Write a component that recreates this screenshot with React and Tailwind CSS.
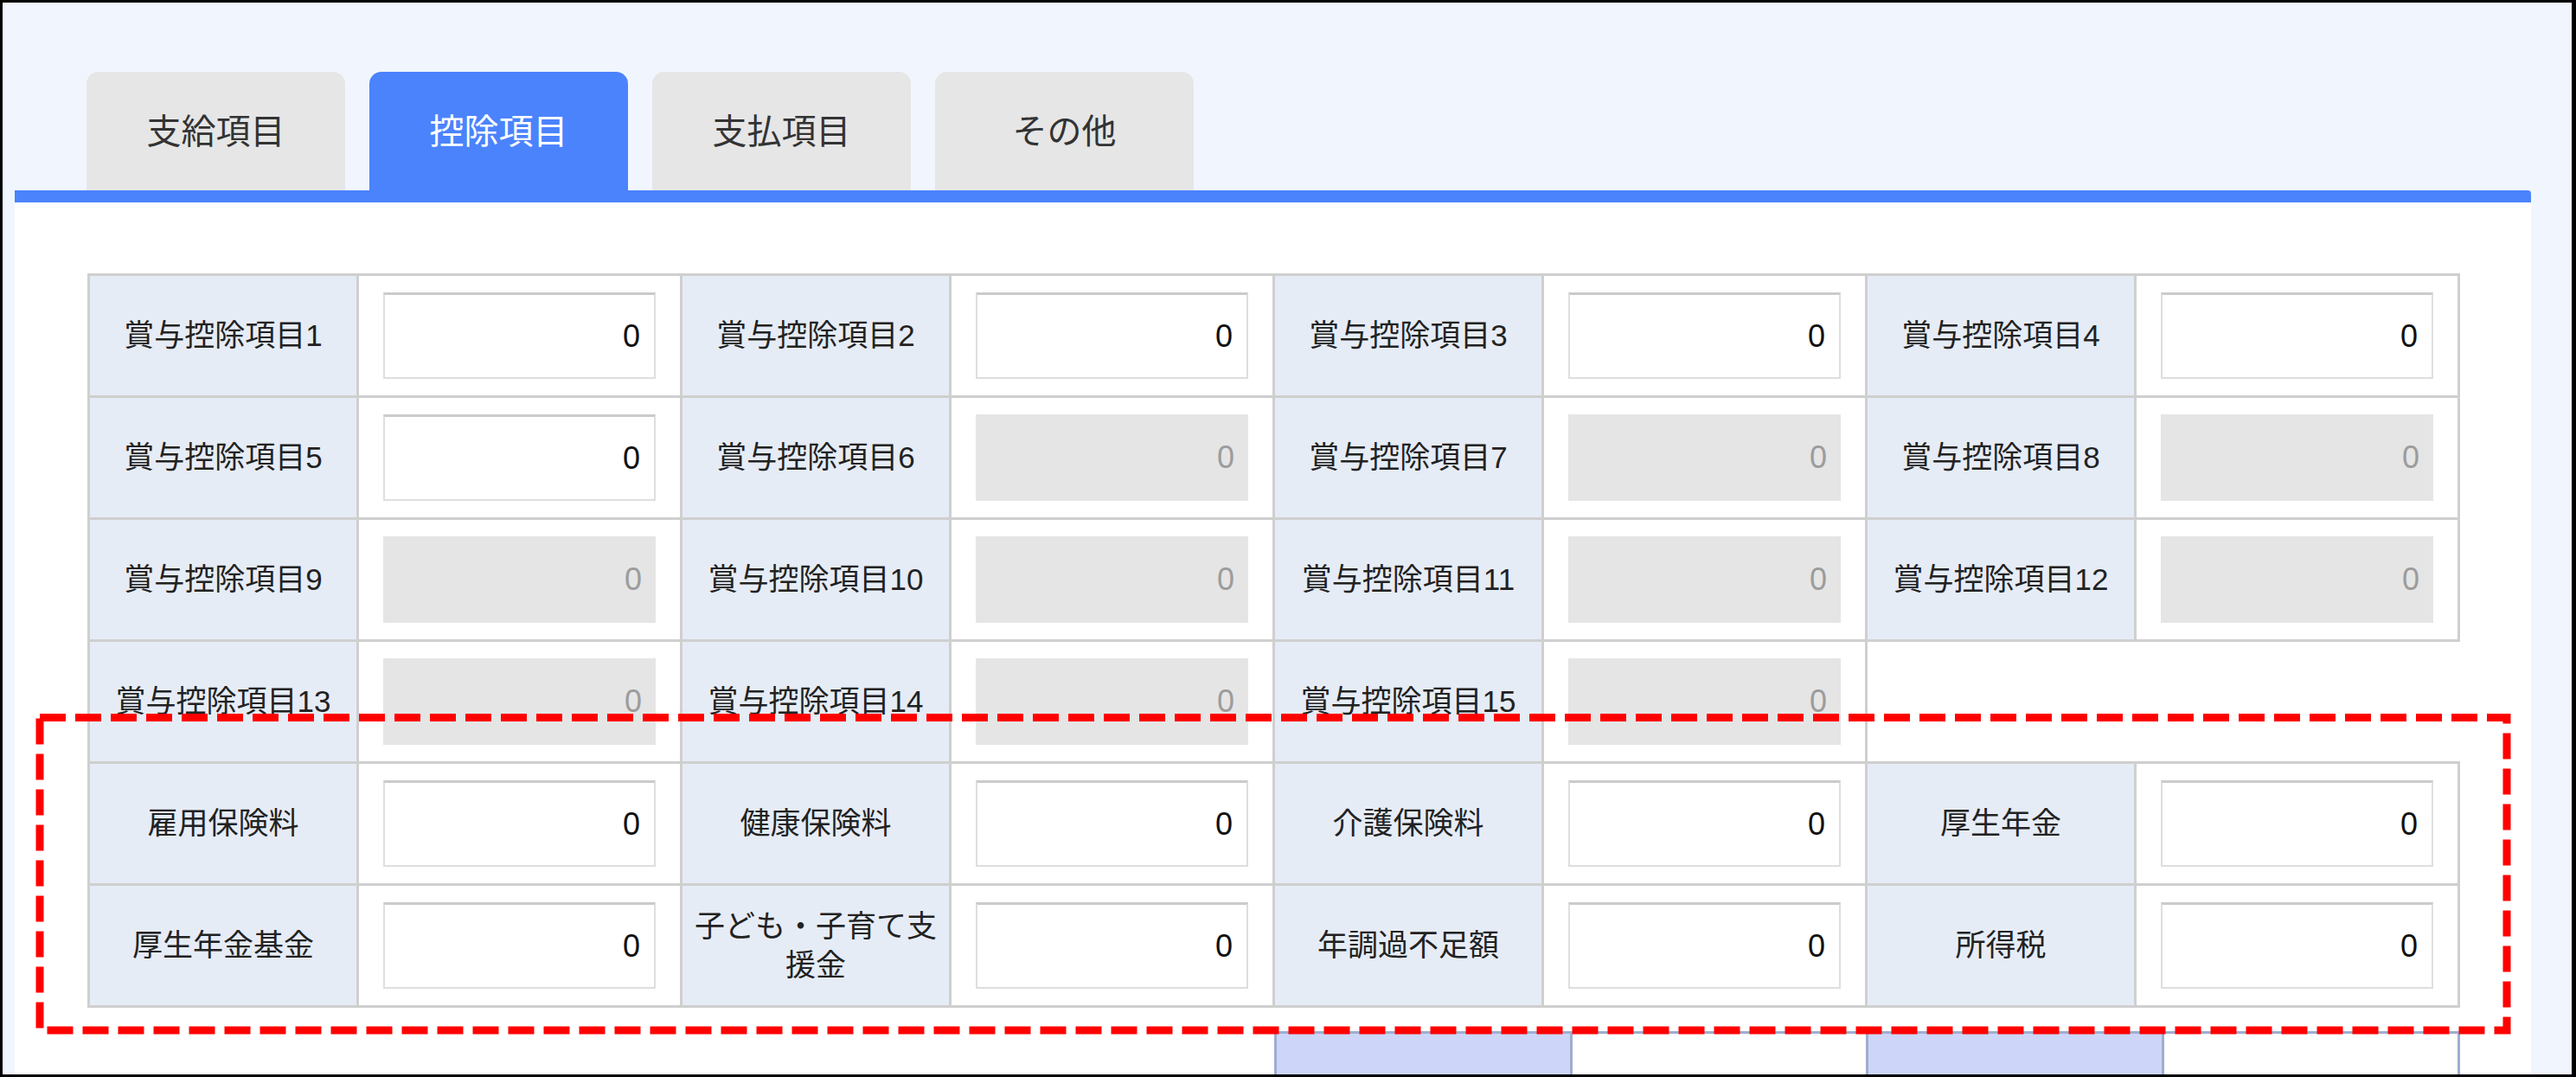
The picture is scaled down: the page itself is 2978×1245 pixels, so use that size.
import React from 'react';

const tabs = ['支給項目', '控除項目', '支払項目', 'その他'];

const rows = [
  [['賞与控除項目1', false], ['賞与控除項目2', false], ['賞与控除項目3', false], ['賞与控除項目4', false]],
  [['賞与控除項目5', false], ['賞与控除項目6', true], ['賞与控除項目7', true], ['賞与控除項目8', true]],
  [['賞与控除項目9', true], ['賞与控除項目10', true], ['賞与控除項目11', true], ['賞与控除項目12', true]],
  [['賞与控除項目13', true], ['賞与控除項目14', true], ['賞与控除項目15', true]],
  [['雇用保険料', false], ['健康保険料', false], ['介護保険料', false], ['厚生年金', false]],
  [['厚生年金基金', false], ['子ども・子育て支援金', false], ['年調過不足額', false], ['所得税', false]],
];

const Label = ({ children }) => (
  <div className="h-[141px] border-r-[3px] border-b-[3px] border-[#cfcfcf] bg-[#e6ecf6] flex items-center justify-center px-[11px] text-center text-[35px] leading-[1.3] text-[#222]">
    {children}
  </div>
);

const Value = ({ disabled }) => (
  <div className="h-[141px] border-r-[3px] border-b-[3px] border-[#cfcfcf] bg-white flex items-center px-[28px]">
    <input
      readOnly
      value="0"
      className={
        disabled
          ? 'w-full h-[100px] text-right pr-[16px] text-[36px] bg-[#e5e5e5] text-[#9c9c9c] outline-none'
          : 'w-full h-[100px] text-right pr-[16px] text-[36px] bg-white text-[#111] border-2 border-[#dedede] border-t-[3px] border-t-[#cbcbcb] outline-none'
      }
    />
  </div>
);

export default function App() {
  return (
    <div className="relative w-[2978px] h-[1245px] border-[3px] border-r-[5px] border-black bg-[#f1f6fe] flex flex-col overflow-hidden font-['Liberation_Sans','Noto_Sans_CJK_JP',sans-serif]">
      {/* tabs */}
      <div className="flex gap-[28px] pl-[97px] mt-[80px]">
        {tabs.map((t, i) => (
          <div
            key={t}
            className={`w-[299px] h-[137px] rounded-t-[14px] flex items-center justify-center text-[40px] ${
              i === 1 ? 'bg-[#4b83fd] text-white' : 'bg-[#e6e6e6] text-[#333]'
            }`}
          >
            {t}
          </div>
        ))}
      </div>

      {/* panel */}
      <div className="ml-[14px] w-[2909px] flex-1 min-h-0 bg-white border-t-[14px] border-[#4b83fd] rounded-tr-[4px] overflow-hidden">
        <div className="ml-[84px] mt-[82px] w-[2743px]">
          <div className="grid grid-cols-[repeat(4,311px_374px)] border-t-[3px] border-l-[3px] border-[#cfcfcf]">
            {rows.map((row, r) => (
              <React.Fragment key={r}>
                {row.map(([label, disabled]) => (
                  <React.Fragment key={label}>
                    <Label>{label}</Label>
                    <Value disabled={disabled} />
                  </React.Fragment>
                ))}
                {row.length < 4 && (
                  <div className="col-span-2 h-[141px] border-b-[3px] border-[#cfcfcf] bg-white" />
                )}
              </React.Fragment>
            ))}
          </div>

          {/* totals row below */}
          <div className="flex justify-end mt-[27px]">
            <div className="grid grid-cols-[repeat(4,342px)] border-t-[3px] border-l-[3px] border-[#9eaed0]">
              <div className="h-[80px] border-r-[3px] border-[#9eaed0] bg-[#cdd6f8]" />
              <div className="h-[80px] border-r-[3px] border-[#9eaed0] bg-white" />
              <div className="h-[80px] border-r-[3px] border-[#9eaed0] bg-[#cdd6f8]" />
              <div className="h-[80px] border-r-[3px] border-[#9eaed0] bg-white" />
            </div>
          </div>
        </div>
      </div>

      {/* red dashed highlight */}
      <svg className="absolute inset-0 w-full h-full pointer-events-none">
        <rect
          x="43"
          y="826.5"
          width="2852"
          height="361.5"
          fill="none"
          stroke="#ff0000"
          strokeWidth="9"
          strokeDasharray="30 11"
        />
      </svg>
    </div>
  );
}
